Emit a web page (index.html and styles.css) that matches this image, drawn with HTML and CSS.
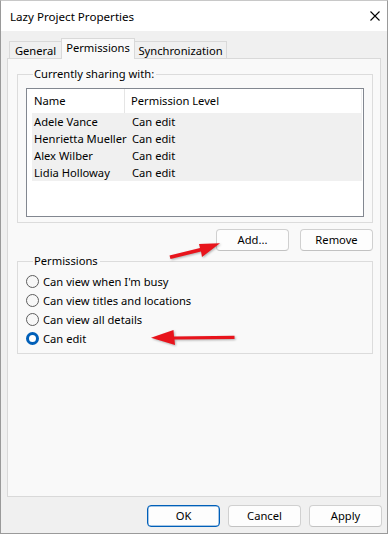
FILE: index.html
```html
<!DOCTYPE html>
<html>
<head>
<meta charset="utf-8">
<link rel="stylesheet" href="styles.css">
</head>
<body>
<div class="window">
  <div class="titlebar">
    <span class="title">Lazy Project Properties</span>
    <svg class="close" width="10" height="10" viewBox="0 0 10 10"><path d="M0.5 0.5L9.5 9.5M9.5 0.5L0.5 9.5" stroke="#000" stroke-width="1.1"/></svg>
  </div>
  <div class="content">
    <div class="tabs">
      <div class="tab t-general">General</div>
      <div class="tab t-perm active">Permissions</div>
      <div class="tab t-sync">Synchronization</div>
    </div>
    <div class="panel">
      <fieldset class="group share">
        <legend>Currently sharing with:</legend>
        <div class="listbox">
          <div class="lheader">
            <div class="hc c1">Name</div>
            <div class="hc c2">Permission Level</div>
          </div>
          <div class="rows">
            <div class="row"><span class="c1">Adele Vance</span><span class="c2">Can edit</span></div>
            <div class="row"><span class="c1">Henrietta Mueller</span><span class="c2">Can edit</span></div>
            <div class="row"><span class="c1">Alex Wilber</span><span class="c2">Can edit</span></div>
            <div class="row"><span class="c1">Lidia Holloway</span><span class="c2">Can edit</span></div>
          </div>
        </div>
      </fieldset>
      <div class="btnrow">
        <button class="btn">Add...</button>
        <button class="btn">Remove</button>
      </div>
      <fieldset class="group perms">
        <legend>Permissions</legend>
        <div class="radio"><span class="circle"></span><span>Can view when I'm busy</span></div>
        <div class="radio"><span class="circle"></span><span>Can view titles and locations</span></div>
        <div class="radio"><span class="circle"></span><span>Can view all details</span></div>
        <div class="radio"><span class="circle on"></span><span>Can edit</span></div>
      </fieldset>
    </div>
    <div class="footer">
      <button class="btn primary">OK</button>
      <button class="btn">Cancel</button>
      <button class="btn">Apply</button>
    </div>
  </div>
  <svg class="arrows" width="388" height="534" viewBox="0 0 388 534">
    <g fill="#e8141c">
      <polygon points="169.5,255.5 200,248 199,244 220,243.3 202,257 201,251.5 170.5,259"/>
      <polygon points="234.5,335.8 174,336.5 173.5,330 151,337.7 175,345 174.5,339.5 234.5,339"/>
    </g>
  </svg>
</div>
</body>
</html>
```
FILE: styles.css
```css
* { box-sizing: border-box; }
html, body { margin: 0; padding: 0; background: #ffffff; }
body {
  font-family: "Noto Sans", "Open Sans", sans-serif;
  font-size: 11.2px;
  color: #000;
}
.window {
  position: relative;
  width: 388px;
  height: 534px;
  border: 1px solid #9a9a9a;
  border-top-color: #c8c8c8;
  display: flex;
  flex-direction: column;
  background: #f0f0f0;
}
.titlebar {
  height: 30px;
  background: #fff;
  display: flex;
  align-items: center;
  justify-content: space-between;
  padding: 0 7px 0 9px;
  flex: none;
}
.title { font-size: 11.6px; line-height: 16px; padding-top: 1px; }
.close { display: block; margin-top: -1px; }
.content {
  flex: 1;
  padding: 7px 0 0 6px;
  display: flex;
  flex-direction: column;
}
.tabs {
  display: flex;
  align-items: flex-end;
  height: 20px;
  padding-left: 2px;
  position: relative;
  z-index: 2;
}
.tab {
  height: 17px;
  border: 1px solid #d9d9d9;
  border-bottom: none;
  background: #f0f0f0;
  display: flex;
  align-items: center;
  justify-content: center;
  line-height: 14px;
  padding-top: 2px;
}
.t-general { width: 52px; border-right: none; }
.t-perm { width: 74px; }
.t-sync { width: 92px; border-left: none; }
.tab.active {
  height: 21px;
  background: #f9f9f9;
  margin-bottom: -1px;
  padding-top: 0;
  padding-bottom: 3px;
}
.panel {
  width: 374px;
  height: 439px;
  background: #f9f9f9;
  border: 1px solid #d9d9d9;
  padding: 7px 7px 0 9px;
  position: relative;
  z-index: 1;
}
.group {
  margin: 0;
  border: 1px solid #dcdcdc;
  padding: 0;
  min-width: 0;
}
.group legend {
  margin-left: 7px;
  padding: 0 2px 0 1px;
  line-height: 16px;
  height: 16px;
}
.share {
  padding: 6px 8px 5px 8px;
}
.listbox {
  height: 129px;
  border: 1px solid #828790;
  background: #fff;
  padding: 0 1px 0 0;
}
.lheader {
  height: 24px;
  display: flex;
  background: #fff;
  border-right: 1px solid #f0f0f0;
}
.hc { line-height: 24px; }
.lheader .c1 {
  width: 98px;
  padding-left: 7px;
  border-right: 1px solid #e5e5e5;
}
.lheader .c2 { padding-left: 6px; }
.rows {
  margin-left: 5px;
  background: #f0f0f0;
}
.row {
  height: 17px;
  display: flex;
  line-height: 17px;
}
.row .c1 { width: 100px; padding-left: 2px; white-space: nowrap; }
.row .c2 { padding-left: 0; }
.btnrow {
  display: flex;
  justify-content: flex-end;
  gap: 11px;
  margin-top: 6px;
  padding-right: 0;
}
.btn {
  font-family: inherit;
  font-size: 11.2px;
  color: #000;
  width: 73px;
  height: 22px;
  padding: 0;
  background: #fdfdfd;
  border: 1px solid #d0d0d0;
  border-bottom-color: #c2c2c2;
  border-radius: 4px;
  line-height: 18px;
}
.btn.primary {
  border: 1px solid #005fb8;
  box-shadow: inset 0 0 0 0.5px #4d8fd0;
}
.perms {
  margin-top: 2px;
  padding: 3px 8px 4px 8px;
  height: 101px;
}
.radio {
  height: 19px;
  display: flex;
  align-items: center;
  gap: 4px;
}
.circle {
  width: 13px;
  height: 13px;
  border-radius: 50%;
  border: 1px solid #5d5d5d;
  background: #f7f7f7;
  flex: none;
}
.circle.on {
  border: 3.5px solid #005fb8;
  background: #fff;
}
.footer {
  display: flex;
  justify-content: flex-end;
  gap: 8px;
  margin-top: 8px;
  padding-right: 5px;
}
.arrows {
  position: absolute;
  left: -1px;
  top: -1px;
  pointer-events: none;
  z-index: 5;
  filter: drop-shadow(1px 1px 1px rgba(0,0,0,0.3));
}
```
